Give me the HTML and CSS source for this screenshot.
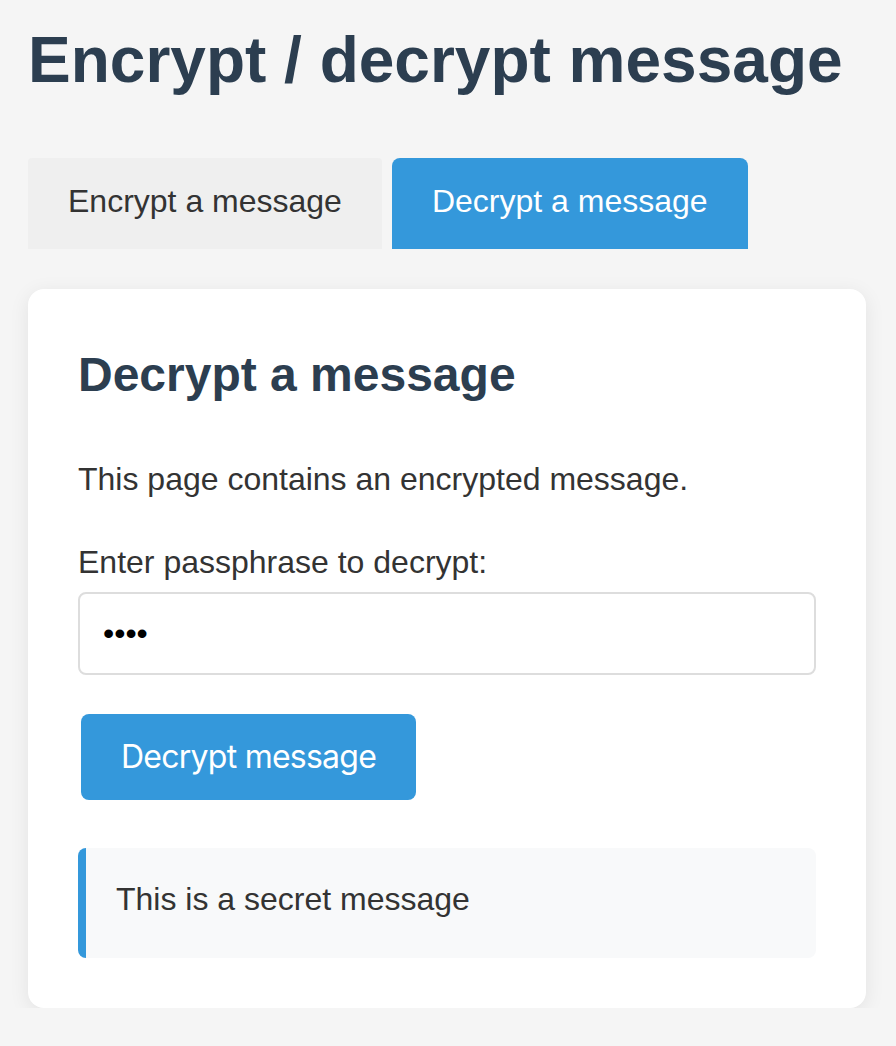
FILE: index.html
```html
<!DOCTYPE html>
<html lang="en">
<head>
<meta charset="utf-8">
<title>Encrypt / decrypt message</title>
<link rel="stylesheet" href="styles.css">
</head>
<body>
  <h1 class="page-title">Encrypt / decrypt message</h1>
  <div class="tabs">
    <div class="tab">Encrypt a message</div>
    <div class="tab tab-active">Decrypt a message</div>
  </div>
  <section class="card">
    <h2 class="card-title">Decrypt a message</h2>
    <p class="intro">This page contains an encrypted message.</p>
    <label class="field-label" for="pass">Enter passphrase to decrypt:</label>
    <input class="field-input" id="pass" type="password" value="1234">
    <button class="btn" type="button">Decrypt message</button>
    <div class="result">This is a secret message</div>
  </section>
</body>
</html>
```

FILE: styles.css
```css
html, body {
  margin: 0;
  background: #f5f5f5;
}
body {
  padding: 23px 28px 0 28px;
  font-family: "Liberation Sans", Arial, Helvetica, sans-serif;
  color: #333;
  font-size: 32px;
  line-height: 37px;
}
.page-title {
  margin: 0;
  font-size: 64px;
  line-height: 74px;
  font-weight: 700;
  color: #2c3e50;
}
.tabs {
  display: flex;
  gap: 10px;
  margin-top: 61px;
}
.tab {
  padding: 25px 40px 29px;
  line-height: 37px;
  background: #efefef;
  color: #333;
  border-radius: 4px 4px 0 0;
}
.tab-active {
  background: #3498db;
  color: #fff;
  border-radius: 8px 8px 0 0;
}
.card {
  margin-top: 40px;
  width: 838px;
  box-sizing: border-box;
  background: #fff;
  border-radius: 16px;
  padding: 50px;
  box-shadow: 0 4px 20px rgba(0, 0, 0, 0.08);
}
.card-title {
  margin: 8px 0 0;
  font-size: 48px;
  line-height: 55px;
  font-weight: 700;
  color: #2c3e50;
}
.intro {
  margin: 59px 0 0;
}
.field-label {
  display: block;
  margin-top: 46px;
}
.field-input {
  display: block;
  box-sizing: border-box;
  width: 100%;
  height: 83px;
  margin-top: 11px;
  padding: 0 23px;
  border: 2px solid #dddddd;
  border-radius: 8px;
  font-family: "Liberation Sans", Arial, sans-serif;
  font-size: 32px;
  color: #000;
  background: #fff;
  outline: none;
}
.btn {
  display: block;
  margin: 39px 0 0 3px;
  height: 86px;
  padding: 0 40px;
  border: none;
  border-radius: 8px;
  background: #3498db;
  color: #fff;
  font-family: Inter, "Liberation Sans", sans-serif;
  font-size: 32px;
  letter-spacing: -0.75px;
  line-height: 86px;
}
.result {
  margin-top: 48px;
  padding: 33px 30px 40px;
  background: #f8f9fa;
  border-left: 8px solid #3498db;
  border-radius: 8px;
}
```
